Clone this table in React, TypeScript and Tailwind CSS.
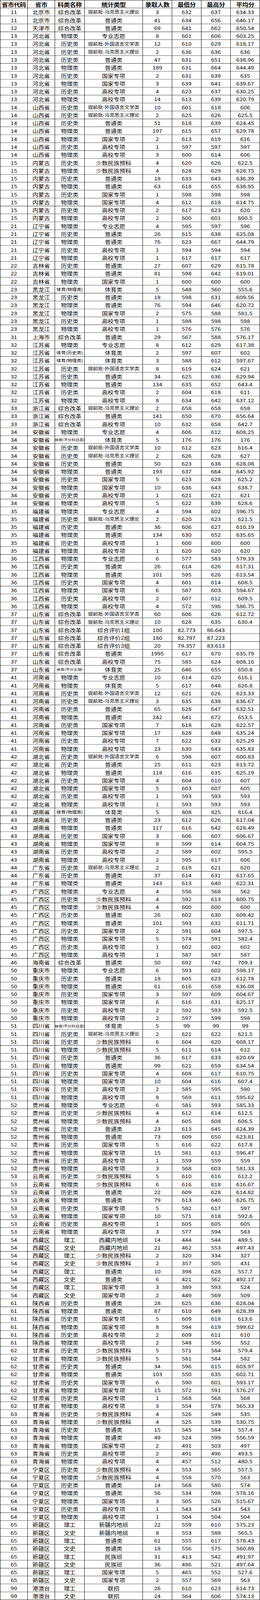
// Admission score table: one header row + 201 data rows, 24px each.
// The capture window is only 4096px tall, so the 4849px sheet is squeezed
// vertically (4096 / 4849) to land fully inside it.

const COLS = ['省市代码', '省市', '科类名称', '统计类型', '录取人数', '最低分', '最高分', '平均分'];
const WIDTHS = ['w-[70px]', 'w-[70px]', 'w-[76px]', 'w-[149px]', 'w-[75px]', 'w-[75px]', 'w-[75px]', 'w-[75px]'];

const RAW = `11|北京市|综合改革|提前批-马克思主义理论|3|632|637|634.33
11|北京市|综合改革|普通类|41|634|656|646.17
12|天津市|综合改革|普通类|69|641|662|650.54
13|河北省|物理类|专业志愿|8|601|606|603.25
13|河北省|历史类|提前批-外国语言文学类|12|610|629|618.17
13|河北省|历史类|提前批-马克思主义理论|2|636|636|636
13|河北省|历史类|普通类|47|631|651|638.96
13|河北省|物理类|普通类|189|631|664|644.49
13|河北省|历史类|国家专项|2|631|639|635
13|河北省|物理类|国家专项|3|639|641|639.67
13|河北省|历史类|高校专项|4|623|637|630.25
13|河北省|物理类|高校专项|14|613|639|620.79
14|山西省|历史类|提前批-外国语言文学类|10|601|618|606
14|山西省|历史类|提前批-马克思主义理论|2|625|626|625.5
14|山西省|历史类|普通类|51|618|639|624.45
14|山西省|物理类|普通类|197|615|657|629.78
14|山西省|物理类|国家专项|2|613|619|616
14|山西省|历史类|高校专项|1|597|597|597
14|山西省|物理类|高校专项|3|600|614|606
15|内蒙古|历史类|少数民族预科|4|620|626|622.5
15|内蒙古|物理类|少数民族预科|4|628|629|628.75
15|内蒙古|历史类|普通类|18|633|643|636.39
15|内蒙古|物理类|普通类|63|618|655|638.95
15|内蒙古|历史类|国家专项|1|598|598|598
15|内蒙古|物理类|国家专项|4|612|618|614.75
15|内蒙古|历史类|高校专项|2|617|623|620
15|内蒙古|物理类|高校专项|2|600|601|600.5
21|辽宁省|物理类|专业志愿|4|595|597|596
21|辽宁省|历史类|普通类|26|615|638|625.08
21|辽宁省|物理类|普通类|76|623|667|644.79
21|辽宁省|历史类|高校专项|1|594|594|594
21|辽宁省|物理类|高校专项|1|617|617|617
22|吉林省|历史类|普通类|27|607|629|615.78
22|吉林省|物理类|普通类|81|598|642|619.01
22|吉林省|物理类|国家专项|1|600|600|600
23|黑龙江|体育(物理类)|体育类|5|548|560|555.6
23|黑龙江|历史类|普通类|18|598|631|609.56
23|黑龙江|物理类|普通类|76|594|646|620.72
23|黑龙江|物理类|国家专项|2|575|588|581.5
23|黑龙江|历史类|高校专项|1|598|598|598
23|黑龙江|物理类|高校专项|1|576|576|576
31|上海市|综合改革|普通类|29|567|588|576.17
32|江苏省|物理类|专业志愿|8|612|629|617.38
32|江苏省|体育(历史类)|体育类|2|597|607|602
32|江苏省|体育(物理类)|体育类|3|588|612|597.67
32|江苏省|历史类|提前批-外国语言文学类|8|619|624|621
32|江苏省|历史类|普通类|34|625|636|629.94
32|江苏省|物理类|普通类|134|635|652|643.4
32|江苏省|历史类|高校专项|2|604|618|611
32|江苏省|物理类|高校专项|8|634|642|637.12
33|浙江省|综合改革|提前批-马克思主义理论|2|658|658|658
33|浙江省|综合改革|普通类|141|650|670|656.64
33|浙江省|综合改革|高校专项|10|632|658|642.7
34|安徽省|物理类|专业志愿|4|606|612|608.25
34|安徽省|体育(不分科目类)|体育类|5|176|176|176
34|安徽省|历史类|提前批-外国语言文学类|10|612|623|616.4
34|安徽省|历史类|提前批-马克思主义理论|2|626|628|627
34|安徽省|历史类|普通类|50|623|638|628.08
34|安徽省|物理类|普通类|193|637|664|645.92
34|安徽省|历史类|国家专项|5|623|628|625.2
34|安徽省|物理类|国家专项|10|636|643|638.7
34|安徽省|历史类|高校专项|1|621|621|621
34|安徽省|物理类|高校专项|5|622|639|628.6
35|福建省|物理类|专业志愿|4|594|602|596.75
35|福建省|历史类|提前批-马克思主义理论|2|620|623|621.5
35|福建省|历史类|普通类|36|606|627|610.19
35|福建省|物理类|普通类|134|630|652|635.65
35|福建省|历史类|高校专项|1|600|600|600
35|福建省|物理类|高校专项|1|620|620|620
36|江西省|物理类|专业志愿|6|577|583|579.33
36|江西省|历史类|普通类|26|614|626|617.31
36|江西省|物理类|普通类|101|595|626|613.54
36|江西省|历史类|国家专项|4|601|614|608.5
36|江西省|物理类|国家专项|6|587|603|594.67
36|江西省|历史类|高校专项|2|607|612|609.5
36|江西省|物理类|高校专项|4|572|596|586.75
37|山东省|综合改革|提前批-外国语言文学类|60|606|626|612.72
37|山东省|综合改革|提前批-马克思主义理论|10|628|635|630.4
37|山东省|综合改革|综合评价1组|100|82.773|86.643|
37|山东省|综合改革|综合评价2组|180|82.797|87.223|
37|山东省|综合改革|综合评价3组|20|79.357|83.613|
37|山东省|综合改革|普通类|1995|617|670|635.79
37|山东省|综合改革|高校专项|75|585|624|608.16
37|山东省|体育(不分文理)|体育类|25|646|655|650.8
41|河南省|物理类|专业志愿|10|614|620|616.1
41|河南省|物理类|体育类|5|617|648|626.8
41|河南省|历史类|提前批-外国语言文学类|12|621|626|623.33
41|河南省|历史类|提前批-马克思主义理论|3|635|638|636.67
41|河南省|历史类|普通类|65|628|647|632.51
41|河南省|物理类|普通类|242|641|672|653.5
41|河南省|历史类|国家专项|7|618|628|622.57
41|河南省|物理类|国家专项|17|628|648|635.24
41|河南省|历史类|高校专项|7|622|632|625.29
41|河南省|物理类|高校专项|23|630|643|635.83
42|湖北省|历史类|提前批-外国语言文学类|6|598|607|600.83
42|湖北省|历史类|普通类|25|611|623|613.72
42|湖北省|物理类|普通类|118|616|635|625.19
42|湖北省|历史类|国家专项|4|604|610|607
42|湖北省|物理类|国家专项|5|603|607|605
42|湖北省|历史类|高校专项|1|593|593|593
42|湖北省|物理类|高校专项|1|593|593|593
43|湖南省|体育(物理类)|体育类|5|808|825|816.4
43|湖南省|历史类|普通类|23|612|626|617.04
43|湖南省|物理类|普通类|117|616|642|628.49
43|湖南省|历史类|国家专项|3|606|607|606.67
43|湖南省|物理类|国家专项|8|599|614|604.75
43|湖南省|历史类|高校专项|2|589|602|595.5
43|湖南省|物理类|高校专项|2|595|617|606
44|广东省|历史类|提前批-马克思主义理论|2|619|621|620
44|广东省|历史类|普通类|37|614|631|617.65
44|广东省|物理类|普通类|143|613|640|622.31
45|广西区|物理类|专业志愿|4|556|568|562
45|广西区|历史类|少数民族预科|4|592|613|600.75
45|广西区|物理类|少数民族预科|4|600|600|600
45|广西区|历史类|普通类|26|602|630|609.42
45|广西区|物理类|普通类|101|593|632|611.71
45|广西区|历史类|国家专项|2|591|604|597.5
45|广西区|物理类|国家专项|5|574|591|582.4
45|广西区|历史类|高校专项|1|602|602|602
45|广西区|物理类|高校专项|1|587|587|587
46|海南省|综合改革|普通类|50|692|742|709.3
50|重庆市|物理类|专业志愿|6|593|602|598.17
50|重庆市|历史类|普通类|18|605|623|612.78
50|重庆市|物理类|普通类|61|616|658|636.08
50|重庆市|历史类|国家专项|3|597|609|604.67
50|重庆市|物理类|国家专项|6|616|631|625.17
50|重庆市|历史类|高校专项|2|592|593|592.5
50|重庆市|物理类|高校专项|2|597|599|598
51|四川省|体育(不分科目类)|体育类|5|99|99|99
51|四川省|历史类|提前批-马克思主义理论|2|621|622|621.5
51|四川省|历史类|少数民族预科|6|604|620|608.17
51|四川省|物理类|少数民族预科|5|611|614|612
51|四川省|历史类|普通类|36|617|633|620.69
51|四川省|物理类|普通类|99|621|659|634.54
51|四川省|历史类|国家专项|4|608|617|610.75
51|四川省|物理类|国家专项|10|604|616|607.4
51|四川省|历史类|高校专项|2|585|595|590
51|四川省|物理类|高校专项|8|569|611|595.62
52|贵州省|物理类|专业志愿|6|581|593|585.33
52|贵州省|历史类|少数民族预科|4|612|614|612.5
52|贵州省|物理类|少数民族预科|4|605|608|606.5
52|贵州省|历史类|普通类|23|613|645|624.39
52|贵州省|物理类|普通类|73|609|650|623.81
52|贵州省|历史类|国家专项|5|616|622|617.8
52|贵州省|物理类|国家专项|15|581|612|596.47
52|贵州省|历史类|高校专项|1|559|559|559
52|贵州省|物理类|高校专项|3|568|603|581.33
53|云南省|历史类|少数民族预科|5|610|616|612.2
53|云南省|物理类|少数民族预科|6|616|618|616.67
53|云南省|历史类|普通类|22|609|628|614.82
53|云南省|物理类|普通类|79|613|640|626.75
53|云南省|历史类|国家专项|5|582|617|597
53|云南省|物理类|国家专项|10|571|618|592.6
53|云南省|历史类|高校专项|1|605|605|605
53|云南省|物理类|高校专项|3|577|594|583
54|西藏区|理工|西藏内地班|14|444|544|489.5
54|西藏区|文史|西藏内地班|21|462|553|497.43
54|西藏区|理工|少数民族预科|2|320|334|327
54|西藏区|文史|少数民族预科|2|357|505|431
54|西藏区|理工|普通类|10|398|628|557.7
54|西藏区|文史|普通类|6|421|562|492.17
54|西藏区|理工|国家专项|3|389|593|524
54|西藏区|文史|国家专项|2|449|569|509
61|陕西省|历史类|普通类|28|625|636|628.04
61|陕西省|物理类|普通类|87|610|649|628.39
61|陕西省|历史类|国家专项|5|609|618|613.6
61|陕西省|物理类|国家专项|8|594|619|599.62
61|陕西省|历史类|高校专项|2|609|611|610
61|陕西省|物理类|高校专项|2|548|556|552
62|甘肃省|历史类|少数民族预科|5|571|584|579.4
62|甘肃省|物理类|少数民族预科|5|581|584|582
62|甘肃省|历史类|普通类|34|596|615|603.97
62|甘肃省|物理类|普通类|103|550|635|602.71
62|甘肃省|历史类|国家专项|6|590|601|593.17
62|甘肃省|物理类|国家专项|15|572|591|576.27
62|甘肃省|历史类|高校专项|1|568|568|568
62|甘肃省|物理类|高校专项|3|554|578|565.33
63|青海省|历史类|少数民族预科|4|526|549|535
63|青海省|物理类|少数民族预科|4|525|539|530.75
63|青海省|历史类|普通类|15|545|584|557.4
63|青海省|物理类|普通类|49|524|599|556.59
63|青海省|物理类|国家专项|2|491|503|497
63|青海省|历史类|高校专项|2|491|496|493.5
63|青海省|物理类|高校专项|4|457|512|480.5
64|宁夏区|历史类|少数民族预科|4|553|565|557.5
64|宁夏区|物理类|少数民族预科|4|558|570|563
64|宁夏区|历史类|普通类|14|568|580|574
64|宁夏区|物理类|普通类|56|534|598|578.16
64|宁夏区|物理类|国家专项|3|505|526|515.67
64|宁夏区|历史类|高校专项|1|543|543|543
64|宁夏区|物理类|高校专项|1|504|504|504
65|新疆区|理工|新疆内地班|22|559|610|575.23
65|新疆区|文史|新疆内地班|8|553|588|565.5
65|新疆区|理工|普通类|61|555|617|578.43
65|新疆区|文史|普通类|18|556|575|560.89
65|新疆区|理工|民族班|31|413|542|491.97
65|新疆区|文史|民族班|36|486|521|497.64
65|新疆区|理工|国家专项|5|465|552|527.6
65|新疆区|文史|国家专项|2|557|569|563
99|港澳台|理工|联招|26|610|623|614.73
99|港澳台|文史|联招|24|564|606|574.13`;

const ROWS = RAW.split('\n').map((line) => line.split('|'));

const ROW = 'flex h-[24px] overflow-hidden';
const CELL = 'shrink-0 h-[24px] flex items-center justify-center border-r border-b border-black whitespace-nowrap overflow-hidden leading-[20px]';

// Excel "shrink to fit": long labels render smaller than the rest of the row
function sizeFor(col: number, text: string) {
  if (col === 2 && text.startsWith('体育')) return text.includes('不分') ? 'text-[10px]' : 'text-[12px]';
  if (col === 3 && text.length >= 10) return 'text-[13px] tracking-[-0.3px]';
  return 'text-[15px]';
}

export default function App() {
  return (
    <div className="h-[4096px] overflow-hidden bg-white">
      <div
        className="w-[666px] origin-top scale-y-[0.84471] bg-white border-l border-t border-black text-black"
        style={{ fontFamily: '"Noto Sans CJK SC", "Noto Sans", sans-serif' }}
      >
        <div className={ROW}>
          {COLS.map((c, j) => (
            <div key={c} className={`${CELL} ${WIDTHS[j]} text-[16px] font-bold tracking-[-0.5px]`}>
              {c}
            </div>
          ))}
        </div>
        {ROWS.map((row, i) => (
          <div key={i} className={ROW}>
            {row.map((v, j) => (
              <div key={j} className={`${CELL} ${WIDTHS[j]} ${sizeFor(j, v)}`}>
                {v}
              </div>
            ))}
          </div>
        ))}
      </div>
    </div>
  );
}
